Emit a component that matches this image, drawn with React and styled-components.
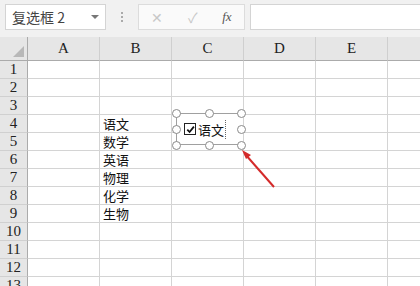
import styled, { createGlobalStyle } from "styled-components";

const GlobalStyle = createGlobalStyle`
  html, body { margin: 0; padding: 0; background: #fff; }
  body { width: 420px; height: 286px; overflow: hidden; font-family: "Noto Sans CJK SC", sans-serif; }
`;

const Toolbar = styled.div`
  display: flex;
  align-items: center;
  height: 37px;
  padding: 0 0 4px 5px;
  box-sizing: border-box;
  background: #f1f1f1;
`;

const NameBox = styled.div`
  width: 101px;
  height: 26px;
  box-sizing: border-box;
  border: 1px solid #d4d4d4;
  background: #fff;
  display: flex;
  align-items: center;
  justify-content: space-between;
  padding: 0 6px;
  font-size: 14px;
  color: #444;
  font-family: "Noto Sans CJK SC", sans-serif;
`;

const Caret = styled.span`
  width: 0;
  height: 0;
  border-left: 4px solid transparent;
  border-right: 4px solid transparent;
  border-top: 4px solid #777;
`;

const Dots = styled.div`
  width: 32px;
  display: flex;
  flex-direction: column;
  align-items: center;
  gap: 2px;
  span {
    width: 2px;
    height: 2px;
    background: #aaa;
  }
`;

const FormulaButtons = styled.div`
  width: 107px;
  height: 26px;
  box-sizing: border-box;
  border: 1px solid #dcdcdc;
  background: #fafafa;
  display: flex;
  align-items: center;
  justify-content: space-around;
  color: #c8c8c8;
  font-size: 14px;
`;

const Fx = styled.span`
  font-family: "Liberation Serif", serif;
  font-style: italic;
  font-size: 13px;
  color: #555;
`;

const FormulaInput = styled.div`
  flex: 1;
  height: 26px;
  margin-left: 5px;
  box-sizing: border-box;
  border: 1px solid #d4d4d4;
  border-right: none;
  background: #fff;
`;

const Sheet = styled.div`
  position: relative;
  display: grid;
  grid-template-columns: 28px 72px 72px 72px 72px 72px 52px;
  grid-auto-rows: 18px;
  grid-template-rows: 24px;
`;

const Corner = styled.div`
  background: #e6e6e6;
  border-right: 1px solid #ababab;
  border-bottom: 1px solid #ababab;
  box-sizing: border-box;
  position: relative;
  &::after {
    content: "";
    position: absolute;
    right: 3px;
    bottom: 3px;
    border-left: 11px solid transparent;
    border-bottom: 11px solid #b8b8b8;
  }
`;

const ColHead = styled.div`
  background: #e6e6e6;
  border-right: 1px solid #cfcfcf;
  border-bottom: 1px solid #ababab;
  box-sizing: border-box;
  display: flex;
  align-items: center;
  justify-content: center;
  font-family: "Liberation Serif", serif;
  font-size: 15px;
  color: #222;
`;

const RowHead = styled.div`
  background: #e6e6e6;
  border-right: 1px solid #ababab;
  border-bottom: 1px solid #d0d0d0;
  box-sizing: border-box;
  display: flex;
  align-items: center;
  justify-content: center;
  font-family: "Liberation Serif", serif;
  font-size: 15px;
  color: #222;
`;

const Cell = styled.div`
  border-right: 1px solid #d4d4d4;
  border-bottom: 1px solid #d4d4d4;
  box-sizing: border-box;
  display: flex;
  align-items: center;
  padding-left: 3px;
  font-family: "Noto Sans CJK SC", sans-serif;
  font-size: 13px;
  color: #111;
  white-space: nowrap;
`;

const Control = styled.div`
  position: absolute;
  left: 176px;
  top: 76px;
  width: 65px;
  height: 32px;
  border-top: 1px solid #a0a0a0;
  border-left: 1px solid #a0a0a0;
  border-bottom: 1px solid #a0a0a0;
  background: #fff;
  box-sizing: border-box;
  display: flex;
  align-items: center;
  padding-left: 7px;
  gap: 2px;
  font-size: 13px;
  color: #111;
`;

const Check = styled.span`
  width: 12px;
  height: 12px;
  box-sizing: border-box;
  border: 1px solid #222;
  background: #fff;
  display: flex;
  align-items: center;
  justify-content: center;
`;

const Caption = styled.span`
  border-right: 1px dotted #666;
  padding-right: 1px;
`;

const Handle = styled.span`
  position: absolute;
  width: 9px;
  height: 9px;
  box-sizing: border-box;
  border-radius: 50%;
  border: 1.5px solid #8a8a8a;
  background: #fff;
  left: ${(p) => p.$x - 4.5}px;
  top: ${(p) => p.$y - 4.5}px;
`;

const Arrow = styled.svg`
  position: absolute;
  left: 236px;
  top: 106px;
`;

const cols = ["A", "B", "C", "D", "E", ""];
const subjects = { 4: "语文", 5: "数学", 6: "英语", 7: "物理", 8: "化学", 9: "生物" };
const rows = Array.from({ length: 13 }, (_, i) => i + 1);
const handles = [
  [0, 0], [33, 0], [65, 0],
  [0, 16], [65, 16],
  [0, 32], [33, 32], [65, 32],
];

export default function App() {
  return (
    <>
      <GlobalStyle />
      <Toolbar>
        <NameBox>
          <span>复选框 2</span>
          <Caret />
        </NameBox>
        <Dots><span /><span /><span /></Dots>
        <FormulaButtons>
          <span>✕</span>
          <span>✓</span>
          <Fx>fx</Fx>
        </FormulaButtons>
        <FormulaInput />
      </Toolbar>
      <Sheet>
        <Corner />
        {cols.map((c, i) => (
          <ColHead key={i}>{c}</ColHead>
        ))}
        {rows.map((r) => [
          <RowHead key={"h" + r}>{r}</RowHead>,
          ...cols.map((c, i) => (
            <Cell key={r + "-" + i}>{i === 1 ? subjects[r] : ""}</Cell>
          )),
        ])}
        <Control>
          <Check>
            <svg width="9" height="9" viewBox="0 0 9 9">
              <path d="M1.3 4.6 L3.6 7 L7.9 1.6" fill="none" stroke="#111" strokeWidth="1.8" />
            </svg>
          </Check>
          <Caption>语文</Caption>
        </Control>
        {handles.map(([x, y], i) => (
          <Handle key={i} $x={176 + x} $y={76 + y} />
        ))}
        <Arrow width="50" height="50" viewBox="0 0 50 50">
          <line x1="38" y1="44" x2="9" y2="11" stroke="#d42a2a" strokeWidth="2" />
          <path d="M6 7 L15 12 L10 16 Z" fill="#d42a2a" />
        </Arrow>
      </Sheet>
    </>
  );
}
